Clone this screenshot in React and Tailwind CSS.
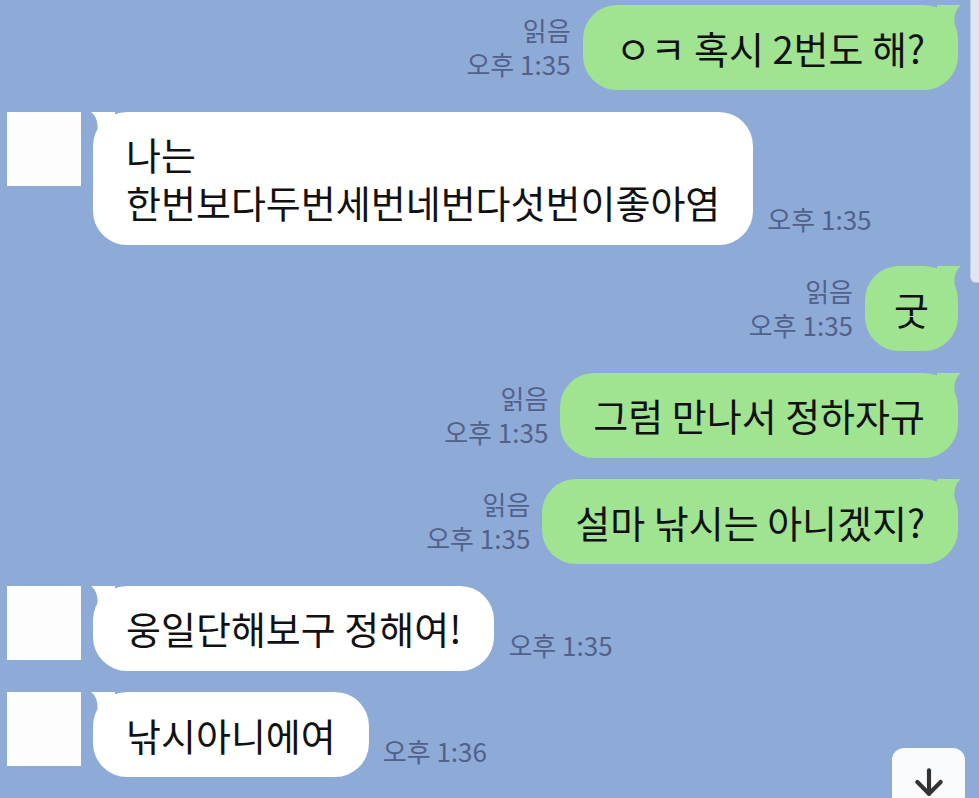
import { ArrowDown } from "lucide-react"

const font = { fontFamily: '"Noto Sans CJK KR", "Noto Sans", sans-serif' }

function Meta({ read, time }) {
  return (
    <div className="flex flex-col items-end text-[26px] leading-[34px] text-[#52618a] pb-[9px] shrink-0">
      {read && <span>읽음</span>}
      <span>{time}</span>
    </div>
  )
}

function MyBubble({ text, read = true, time = "오후 1:35", px = "px-[33px]" }) {
  return (
    <div className="flex justify-end items-end gap-[12px]">
      <Meta read={read} time={time} />
      <div className={`relative bg-[#a0e391] rounded-[34px] py-[18.5px] ${px} text-[38px] leading-[48px] text-[#111] whitespace-nowrap`}>
        <svg className="absolute top-0 right-[-3px]" width="24" height="24" viewBox="0 0 24 24">
          <path d="M0 0 H24 C19 4 16 10 18 24 H0 Z" fill="#a0e391" />
        </svg>
        <span className="relative">{text}</span>
      </div>
    </div>
  )
}

function TheirBubble({ lines, time }) {
  return (
    <div className="flex items-start gap-[12px]">
      <div className="w-[74px] h-[74px] bg-[#fdfdfd] shrink-0" />
      <div className="flex items-end gap-[14px]">
        <div className="relative bg-white rounded-[34px] py-[18.5px] px-[33px] text-[38px] leading-[48px] text-[#111] whitespace-nowrap">
          <svg className="absolute top-0 left-[-2px]" width="24" height="24" viewBox="0 0 24 24">
            <path d="M24 0 H0 C5 4 8 10 6 24 H24 Z" fill="#ffffff" />
          </svg>
          {lines.map((l, i) => (
            <div key={i} className="relative">{l}</div>
          ))}
        </div>
        <span className="text-[26px] leading-[34px] text-[#52618a] pb-[9px] shrink-0">{time}</span>
      </div>
    </div>
  )
}

export default function App() {
  return (
    <div style={font} className="relative w-[979px] h-[798px] overflow-hidden bg-[#8eabd8]">
      <div className="flex flex-col gap-[21.5px] pt-[5px] pl-[7px] pr-[21px]">
        <MyBubble text="ㅇㅋ 혹시 2번도 해?" />
        <TheirBubble lines={["나는", "한번보다두번세번네번다섯번이좋아염"]} time="오후 1:35" />
        <MyBubble text="굿" px="px-[29px]" />
        <MyBubble text="그럼 만나서 정하자규" />
        <MyBubble text="설마 낚시는 아니겠지?" />
        <TheirBubble lines={["웅일단해보구 정해여!"]} time="오후 1:35" />
        <TheirBubble lines={["낚시아니에여"]} time="오후 1:36" />
      </div>

      {/* scrollbar */}
      <div className="absolute top-0 right-0 w-[9px] h-[283px] bg-[#dfe6f3] border-l border-b border-[#c3cde0] rounded-bl-[6px]" />

      {/* scroll to bottom */}
      <div className="absolute left-[892px] top-[748px] w-[73px] h-[70px] bg-[#fafbfd] rounded-[12px] flex justify-center pt-[14px]">
        <ArrowDown size={40} strokeWidth={2.5} className="text-[#333]" />
      </div>
    </div>
  )
}
